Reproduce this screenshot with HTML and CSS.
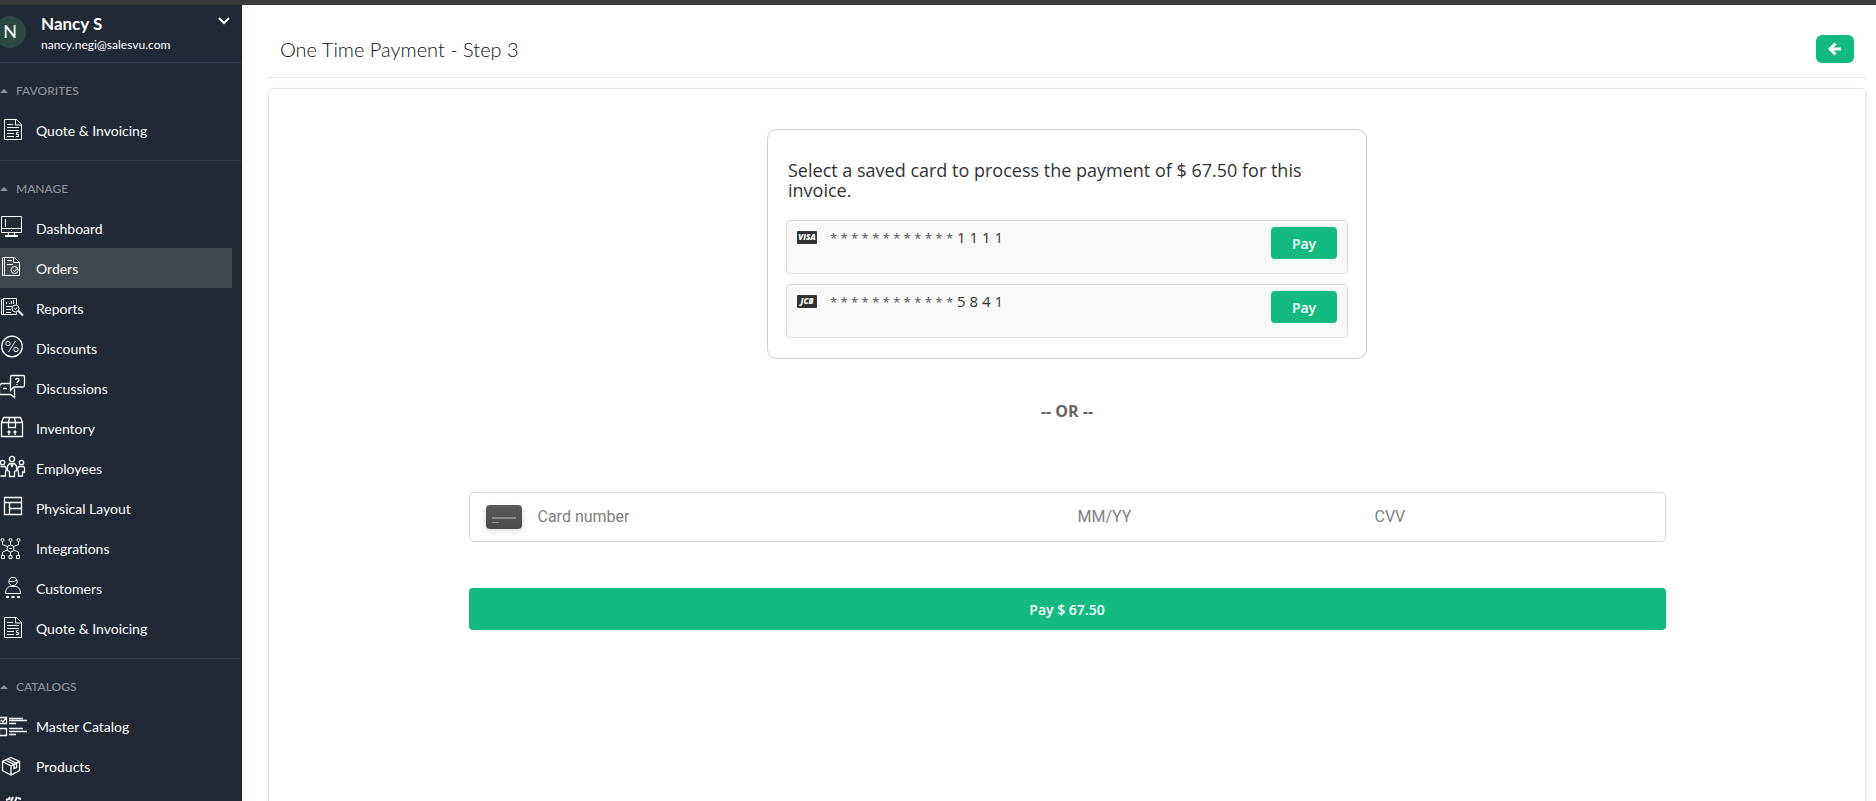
FILE: index.html
```html
<!DOCTYPE html>
<html lang="en">
<head>
    <meta charset="UTF-8">
    <meta name="viewport" content="width=device-width, initial-scale=1.0">
    <title>One Time Payment</title>
    <link rel="stylesheet" href="styles.css">
</head>
<body>
    <div class="topbar"></div>
    <div class="layout">
        <!-- sidebar -->
        <aside class="sidebar">
            <div class="user">
                <div class="avatar">N</div>
                <div class="user-info">
                    <strong>Nancy S</strong>
                    <span>nancy.negi@salesvu.com</span>
                </div>
                <button class="user-toggle" type="button" aria-label="Account menu">
                    <svg width="12" height="8" viewBox="0 0 12 8"><path d="M1 1l5 5 5-5" stroke-width="2"/></svg>
                </button>
            </div>
            <nav>
                <section class="group">
                    <h2>Favorites</h2>
                    <ul>
                        <li><a href="#">
                            <svg class="icon" viewBox="0 0 28 32"><path d="M4.500 5.500h12l5 5v15h-17zM15.500 5.500v5.500h6M7 10.500h6M7 13.500h12M7 16.500h12M7 19.500h7M7 22.500h7M18.500 18.500h-2v2h2v2h-2.500"/></svg>
                            Quote &amp; Invoicing</a></li>
                    </ul>
                </section>
                <section class="group">
                    <h2>Manage</h2>
                    <ul>
                        <li><a href="#">
                            <svg class="icon" viewBox="0 0 28 32"><path d="M1.500 4.500h20v16h-20zM1.500 16.500h20M5.500 7v8M9 20.500l-1 3M14 20.500l1 3M11 18.500h1"/><path d="M5 24h13" stroke-width="2"/></svg>
                            Dashboard</a></li>
                        <li class="active"><a href="#">
                            <svg class="icon" viewBox="0 0 28 32"><path d="M4.500 23.500h-2v-18h11M4.500 5.500v18h15v-13l-5-5M13.500 5.500v5h6M7 8.500h5M7 12.500h6"/><circle cx="14.500" cy="18" r="3.500"/><path d="M13 18l1.500 1.500 2.500-3"/></svg>
                            Orders</a></li>
                        <li><a href="#">
                            <svg class="icon" viewBox="0 0 28 32"><path d="M3.500 7.500h-2v15h2M3.500 6.500h13v6M3.500 6.500v16h13v-2M6.500 12v-2M9.500 12v-1M11.500 12v-3M13.500 12v-4M6 14.500h6M6 17.500h5M6 20.500h5"/><circle cx="15.500" cy="16.500" r="3.500"/><path d="M14 16.500l1.500 1 1.500-2"/><path d="M18.500 19l4.500 4.500" stroke-width="2"/></svg>
                            Reports</a></li>
                        <li><a href="#">
                            <svg class="icon" viewBox="0 0 28 32"><circle cx="12" cy="14.500" r="10.300" stroke-width="1.300"/><circle cx="8" cy="11.500" r="2.200"/><circle cx="16" cy="17.500" r="2.200"/><path d="M15.500 9l-7 11"/></svg>
                            Discounts</a></li>
                        <li><a href="#">
                            <svg class="icon" viewBox="0 0 28 32"><path d="M12 3.500h11a1.500 1.500 0 0 1 1.500 1.500v8.500a1.500 1.500 0 0 1-1.500 1.500h-9l-3.500 3.500v-13.500a1.500 1.500 0 0 1 1.500-1.500zM10 11.500h-8.500l-2 2v9h11l4 3v-9M3 16.500h4M15.500 8c0-2 3.500-2 3.500 0 0 1.500-2 1.500-2 3M17 12v1" stroke-width="1.300"/></svg>
                            Discussions</a></li>
                        <li><a href="#">
                            <svg class="icon" viewBox="0 0 28 32"><path d="M1.500 10.500l2-5h17l2 5v14h-21zM1.500 10.500h21M9.500 5.500l-1 5v5h7v-5l-1-5M9 23v-4M7.500 20.500l1.500-1.500 1.500 1.500M15 23v-4M13.500 20.500l1.500-1.500 1.500 1.500" stroke-width="1.300"/></svg>
                            Inventory</a></li>
                        <li><a href="#">
                            <svg class="icon" viewBox="0 0 28 32"><g stroke-width="1.300"><circle cx="12" cy="7" r="2.600"/><circle cx="2.500" cy="10.500" r="2.200"/><circle cx="21.500" cy="10.500" r="2.200"/><path d="M9.500 24.500v-5l-2-1v-4.500l2-2.500h5l2 2.500v4.500l-2 1v5zM10.500 11.500l1.500 3 1.500-3M.5 14.500h4.500l1.500 2-1 4v3.500h-5M23.500 14.500h-4.500l-1.500 2 1 4v3.500h4v-4h2v-4z"/></g></svg>
                            Employees</a></li>
                        <li><a href="#">
                            <svg class="icon" viewBox="0 0 28 32"><path d="M4.500 5.500h17v17h-17zM4.500 10.500h17M9.500 10.500v12M9.500 16.500h12" stroke-width="1.300"/></svg>
                            Physical Layout</a></li>
                        <li><a href="#">
                            <svg class="icon" viewBox="0 0 28 32"><circle cx="2.500" cy="8" r="1.500"/><circle cx="10.500" cy="8" r="1.500"/><circle cx="18.500" cy="8" r="1.500"/><circle cx="10.500" cy="16.500" r="3.500"/><path d="M2.500 9.500v3l5 2M18.500 9.500v3l-5 2M10.500 9.500v3.500M2.500 23v-3l5-2M18.500 23v-3l-5-2M10.500 20v3M9 16.500h3M1.500 23.500h3v3h-3zM9 23.500h3v3h-3zM16.500 23.500h3v3h-3z"/></svg>
                            Integrations</a></li>
                        <li><a href="#">
                            <svg class="icon" viewBox="0 0 28 32"><circle cx="13" cy="9.500" r="4.200"/><path d="M9 9c2 1 5 1 8-1M5.500 21.500c0-4 2-7 5-7h5c3 0 5 3 5 7z"/><path d="M6 25h3M11.500 25h3M17 25h3" stroke-width="2"/></svg>
                            Customers</a></li>
                        <li><a href="#">
                            <svg class="icon" viewBox="0 0 28 32"><path d="M4.500 5.500h12l5 5v15h-17zM15.500 5.500v5.500h6M7 10.500h6M7 13.500h12M7 16.500h12M7 19.500h7M7 22.500h7M18.500 18.500h-2v2h2v2h-2.500"/></svg>
                            Quote &amp; Invoicing</a></li>
                    </ul>
                </section>
                <section class="group">
                    <h2>Catalogs</h2>
                    <ul>
                        <li><a href="#">
                            <svg class="icon" viewBox="0 0 28 32"><path d="M-.5 7.500h7v6h-7zM-.5 18.500h7v7h-7zM1 10l2 2 3-4M9 8.500h14M9 10.500h18M9 13.500h7M9 18.500h14M9 21.500h18M9 24.500h7" stroke-width="1.300"/></svg>
                            Master Catalog</a></li>
                        <li><a href="#">
                            <svg class="icon" viewBox="0 0 28 32"><path d="M11 7.500l8.500 4v9l-8.500 4.500-8.500-4.500v-9zM2.500 11.500l8.500 4.500 8.500-4.500M11 16v9M5.500 10l8.500 4.500v4l2.500-1v-4l-8.500-4.500" stroke-width="1.300"/></svg>
                            Products</a></li>
                        <li><a href="#" aria-label="More">
                            <svg class="icon" viewBox="0 0 28 32"><path d="M6 10l3-1 1-2M11 11l2-4M15 11l2-4M18 8l3 1" stroke-width="2"/></svg>
                            </a></li>
                    </ul>
                </section>
            </nav>
        </aside>

        <!-- content -->
        <main>
            <header class="page-head">
                <h1>One Time Payment - Step 3</h1>
                <button class="btn back" type="button" aria-label="Back">
                    <svg width="14" height="14" viewBox="0 0 14 14"><path d="M7.500 1.500L2 7l5.500 5.500M2.500 7h10.500" stroke-width="3"/></svg>
                </button>
            </header>
            <div class="panel">
                <section class="saved">
                    <p>Select a saved card to process the payment of $ 67.50 for this invoice.</p>
                    <div class="card-row">
                        <svg class="brand" viewBox="0 0 20 13"><rect width="20" height="13" rx="1"/><text x="10" y="9">VISA</text></svg>
                        <span class="number"><span class="stars">* * * * * * * * * * * *</span> 1 1 1 1</span>
                        <button class="btn pay" type="button">Pay</button>
                    </div>
                    <div class="card-row">
                        <svg class="brand" viewBox="0 0 20 13"><rect width="20" height="13" rx="1"/><text x="10" y="9">JCB</text></svg>
                        <span class="number"><span class="stars">* * * * * * * * * * * *</span> 5 8 4 1</span>
                        <button class="btn pay" type="button">Pay</button>
                    </div>
                </section>
                <p class="or">-- OR --</p>
                <form class="card-form">
                    <div class="fields">
                        <svg class="card-icon" viewBox="0 0 36 24"><path d="M6 13h24" stroke-width="2"/><path d="M6 17.500h7"/></svg>
                        <input class="f-number" type="text" placeholder="Card number" aria-label="Card number">
                        <input class="f-date" type="text" placeholder="MM/YY" aria-label="Expiry date">
                        <input class="f-cvv" type="text" placeholder="CVV" aria-label="CVV">
                    </div>
                    <button class="btn submit" type="button">Pay $ 67.50</button>
                </form>
            </div>
        </main>
    </div>
</body>
</html>
```
FILE: styles.css
```css
*{
    margin: 0;
    padding: 0;
    box-sizing: border-box;
}
body{
    display: flex;
    flex-direction: column;
    height: 100vh;
    overflow: hidden;
    background: #fff;
    font-family: "Open Sans", sans-serif;
    color: #333;
}
ul{
    list-style: none;
}
svg{
    fill: none;
    stroke: #fff;
}
.topbar{
    flex: none;
    height: 5px;
    background: #3b3b3b;
}
.layout{
    display: flex;
    flex: 1;
    min-height: 0;
}

/* sidebar */
.sidebar{
    flex: none;
    width: 242px;
    overflow: hidden;
    background: #212936;
    color: #fff;
    font-family: Lato, sans-serif;
}
.user{
    display: flex;
    height: 58px;
    border-bottom: 1px solid #2d3947;
}
.avatar{
    width: 32px;
    height: 32px;
    margin: 11px 15px 0 -6px;
    border-radius: 50%;
    background: #2b4a3f;
    font-size: 18px;
    line-height: 30px;
    text-align: center;
}
.user-info{
    flex: 1;
    padding-top: 8px;
}
.user-info strong,
.user-info span{
    display: block;
    font-size: 17px;
    line-height: 22px;
}
.user-info span{
    font-size: 12px;
    line-height: 20px;
}
.user-toggle{
    align-self: flex-start;
    margin: 12px 12px 0 0;
    border: 0;
    background: none;
    line-height: 8px;
}
.group{
    padding: 16px 0 10px;
    border-bottom: 1px solid #2f3845;
}
.group h2{
    display: flex;
    align-items: center;
    margin-bottom: 7px;
    color: #8f9296;
    font-size: 12px;
    font-weight: 500;
    line-height: 24px;
    text-transform: uppercase;
}
.group h2::before{
    content: "";
    margin: 0 8px 0 0;
    border: 4px solid transparent;
    border-top: 0;
    border-bottom-color: #8f9296;
}
.group li{
    margin-right: 10px;
}
.group li.active{
    background: #40464d;
}
.group a{
    display: flex;
    align-items: center;
    height: 40px;
    color: #fff;
    font-size: 14px;
    text-decoration: none;
}
.icon{
    flex: none;
    width: 28px;
    height: 32px;
    margin-right: 8px;
}

/* content */
main{
    display: flex;
    flex: 1;
    flex-direction: column;
    min-width: 0;
    overflow: hidden;
    padding: 0 10px 0 26px;
}
.page-head{
    display: flex;
    flex: none;
    align-items: center;
    justify-content: space-between;
    height: 73px;
    margin-bottom: 10px;
    padding: 16px 12px 0;
    border-bottom: 1px solid #e5e5e5;
}
.page-head h1{
    color: #111;
    font-family: Lato, sans-serif;
    font-size: 20px;
    font-weight: 300;
    line-height: 28px;
}
.btn{
    border: 0;
    border-radius: 4px;
    background: #12b981;
    color: #fff;
    font-family: "Open Sans", sans-serif;
    font-size: 14px;
    font-weight: 600;
    cursor: pointer;
}
.back{
    display: flex;
    align-items: center;
    justify-content: center;
    width: 38px;
    height: 28px;
    border-radius: 6px;
}
.panel{
    flex: none;
    min-height: 100vh;
    margin: 0 1px;
    padding-top: 40px;
    border-top: 1px solid #e5e5e5;
    border-radius: 4px;
    box-shadow: 0 2px 3px rgba(0, 0, 0, .25);
}
.saved{
    width: 600px;
    max-width: 100%;
    margin: 0 auto;
    padding: 30px 18px 20px;
    border: 1px solid #ccc;
    border-radius: 10px;
}
.saved p{
    margin: 0 2px 20px;
    font-size: 18px;
    line-height: 20px;
}
.card-row{
    display: flex;
    align-items: flex-start;
    height: 54px;
    padding: 6px 10px;
    border: 1px solid #ddd;
    border-radius: 4px;
    background: #f9f9f9;
}
.card-row + .card-row{
    margin-top: 10px;
}
.brand{
    width: 20px;
    height: 13px;
    margin: 4px 13px 0 0;
    fill: #333;
    stroke: none;
}
.brand text{
    fill: #fff;
    font: italic 800 8px "Open Sans", sans-serif;
    text-anchor: middle;
}
.number{
    flex: 1;
    font-size: 15px;
    line-height: 20px;
}
.stars{
    color: #555;
    font-size: 13px;
}
.pay{
    width: 66px;
    height: 32px;
}
.or{
    margin-top: 40px;
    color: #666;
    font-size: 16px;
    font-weight: 700;
    line-height: 24px;
    text-align: center;
}
.card-form{
    width: 75%;
    margin: 69px auto 0;
}
.fields{
    display: flex;
    align-items: center;
    height: 50px;
    padding: 0 16px;
    border: 1px solid #d8d8d8;
    border-radius: 5px;
}
.card-icon{
    flex: none;
    width: 36px;
    height: 24px;
    margin-right: 16px;
    border-radius: 4px;
    background: linear-gradient(#58595b, #4a4b4d);
    box-shadow: 0 2px 6px rgba(0, 0, 0, .15);
    stroke: #8c8c8c;
}
.fields input{
    min-width: 0;
    border: 0;
    outline: 0;
    font-family: Roboto, sans-serif;
    font-size: 16px;
    line-height: 24px;
}
.fields input::placeholder{
    color: #808080;
}
.f-number{
    flex: 540;
}
.f-date{
    flex: 297;
}
.f-cvv{
    flex: 274;
}
.submit{
    display: block;
    width: 100%;
    height: 42px;
    margin-top: 46px;
}
```
